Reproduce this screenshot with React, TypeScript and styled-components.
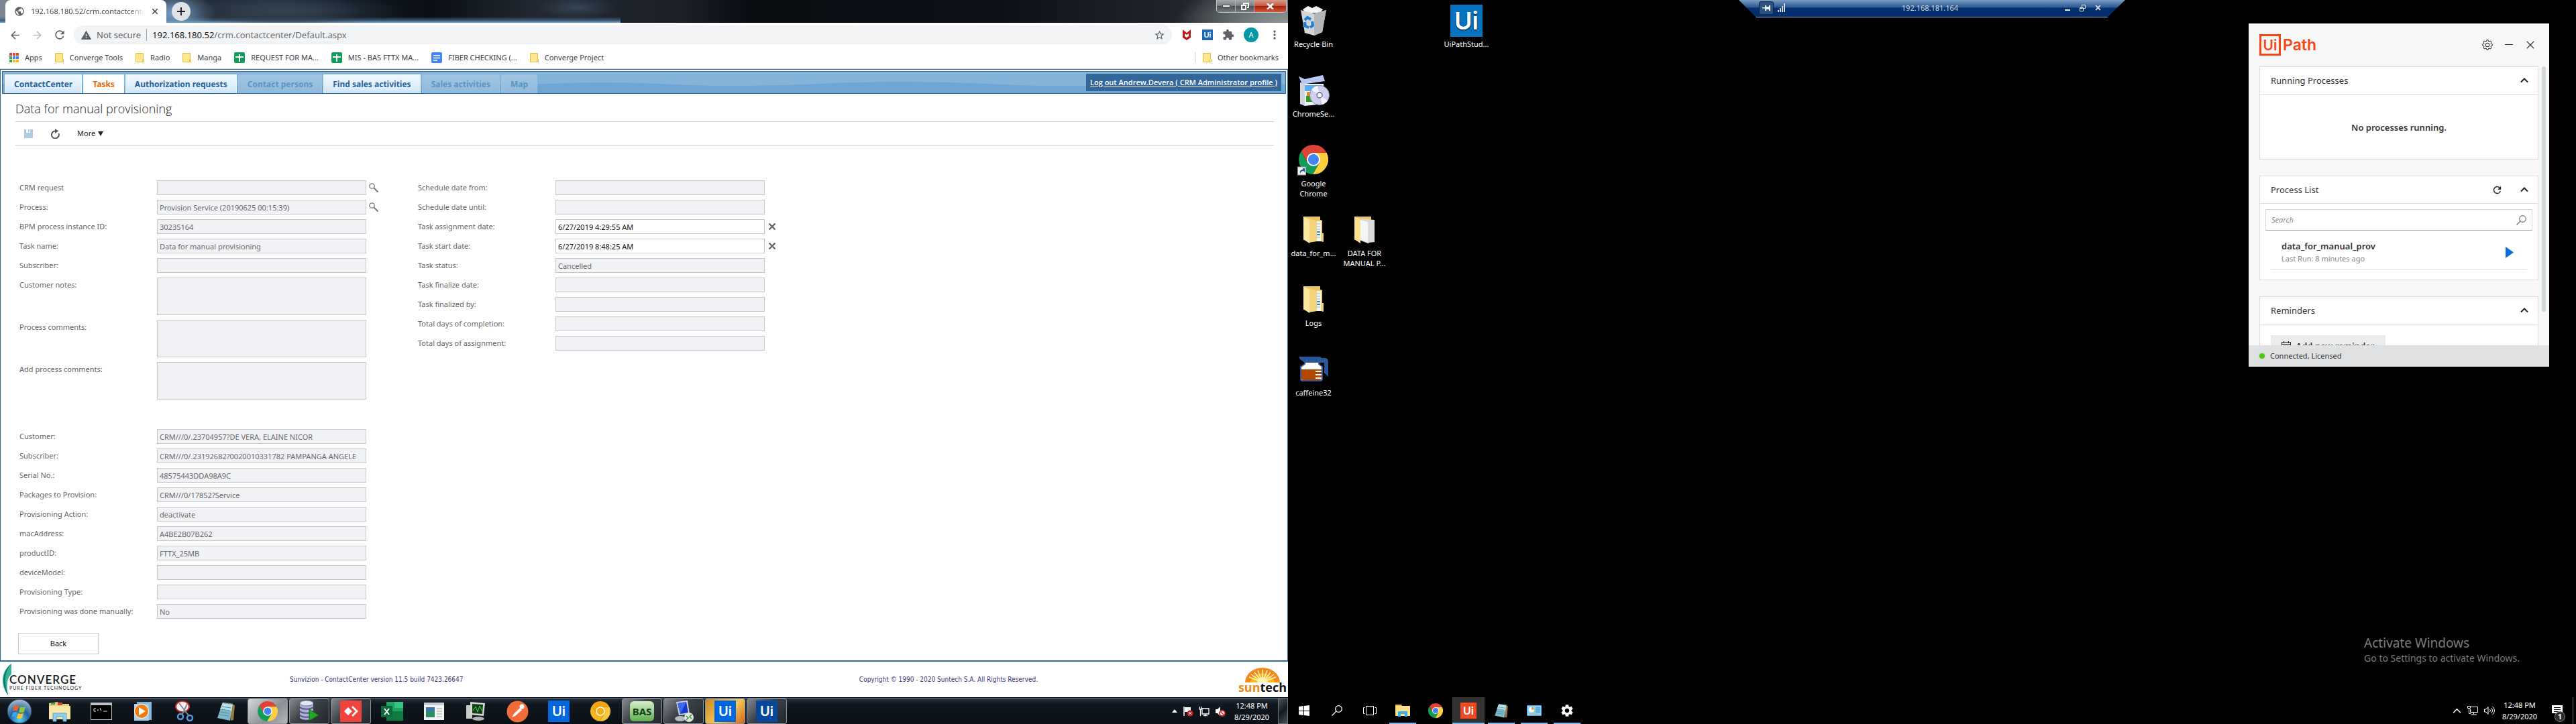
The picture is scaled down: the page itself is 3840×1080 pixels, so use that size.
import React from "react";
import styled, { createGlobalStyle, css } from "styled-components";
import {
  MdArrowBack, MdArrowForward, MdRefresh, MdStarBorder, MdExtension, MdMoreVert, MdWarning, MdPublic, MdSettings,
} from "react-icons/md";
import { BsGear } from "react-icons/bs";

const UI_FONT = '"Noto Sans", "Open Sans", sans-serif';

const GlobalStyle = createGlobalStyle`
  *, *::before, *::after { box-sizing: border-box; }
  body { margin: 0; background: #000; font-family: ${UI_FONT}; font-size: 11px; line-height: 16px; color: #333; }
  button, input, textarea { font: inherit; margin: 0; }
  h1, h2, p, ul { margin: 0; padding: 0; font-weight: 400; }
  ul { list-style: none; }
  svg { display: block; flex: none; }
`;

const Desktops = styled.div`
  display: grid;
  grid-template-columns: 1fr 1fr;
  min-height: 100vh;
  overflow: hidden;
`;

const plainButton = css`
  display: flex;
  align-items: center;
  justify-content: center;
  padding: 0;
  border: 0;
  background: none;
  color: inherit;
  cursor: pointer;
`;

/* ---------- shared marks ---------- */

const UiSquare = styled.span<{ $size: number; $bg: string; $font: number }>`
  display: flex;
  align-items: center;
  justify-content: center;
  width: ${(p) => p.$size}px;
  height: ${(p) => p.$size}px;
  background: ${(p) => p.$bg};
  color: #fff;
  font-family: Inter, sans-serif;
  font-size: ${(p) => p.$font}px;
  line-height: ${(p) => p.$size}px;
  font-weight: 600;
`;

const ChromeMark = ({ size, mono }: { size: number; mono?: boolean }) => (
  <svg width={size} height={size} viewBox="2 2 44 44">
    <path d="M5.54 12.03A22 22 0 0 1 43.6 14H24L15.34 29Z" fill={mono ? "#f2a60d" : "#db4437"} />
    <path d="M43.6 14A22 22 0 0 1 22.86 45.97L32.66 29 24 14Z" fill={mono ? "#fbc63c" : "#ffcd40"} />
    <path d="M22.86 45.97A22 22 0 0 1 5.54 12.03L15.34 29H32.66Z" fill={mono ? "#f7b51d" : "#0f9d58"} />
    <circle cx="24" cy="24" r="10" fill="#fff" />
    <circle cx="24" cy="24" r="8" fill={mono ? "#f4b01b" : "#4285f4"} />
  </svg>
);

const Notepad = ({ size }: { size: number }) => (
  <svg width={size} height={size} viewBox="0 0 32 32">
    <path d="M24 5l5 2-2 22-4 1z" fill="#9b7d3c" />
    <path d="M11 3l15 2-4 25-19-4z" fill="#7db9c8" />
    <path d="M11 3l15 2-2 11-17-3z" fill="#b9dfe6" />
    <path d="M10 9l13 2M9 13l13 2M8 17l13 2M6 21l14 2" stroke="#4f8fa3" />
    <path d="M11 3l15 2" stroke="#56606a" strokeWidth="2" strokeDasharray="1 1" />
  </svg>
);

/* ---------- browser ---------- */

const LeftDesktop = styled.section`
  display: flex;
  flex-direction: column;
  min-width: 0;
  background: #fff;
`;

const TabStrip = styled.header`
  display: flex;
  align-items: flex-end;
  height: 34px;
  padding-left: 8px;
  background:
    radial-gradient(120px 26px at 420px 16px, #33414f, transparent),
    radial-gradient(170px 24px at 430px 16px, #2a3846, transparent),
    radial-gradient(60px 30px at 262px 20px, #7ba6cf, transparent),
    radial-gradient(60px 18px at 860px 11px, #344354, transparent),
    linear-gradient(to top, #82add6 0, #3f5d7c 3px, transparent 9px) 0 0 / 925px 34px no-repeat,
    radial-gradient(170px 60px at 100% 100%, #8f9799, transparent),
    linear-gradient(90deg, #7d8894 0, #26313d 280px, #161e28 500px, #0a0f15 640px, #222831 800px, #1b2029 1010px, #090d12 1120px, #0c1117 1480px, #20252b 1760px, #51585b 100%);
`;

const BrowserTab = styled.div`
  display: flex;
  align-items: center;
  gap: 9px;
  width: 240px;
  height: 34px;
  padding: 0 11px 0 13px;
  border-radius: 8px 8px 0 0;
  background: #fff;
  color: #45494d;
`;

const TabTitle = styled.span`
  flex: 1;
  overflow: hidden;
  white-space: nowrap;
  mask-image: linear-gradient(90deg, #000 86%, transparent);
`;

const TabClose = styled.button`
  ${plainButton}
  width: 12px;
  height: 12px;
  color: #3c4043;
`;

const NewTab = styled.button`
  ${plainButton}
  align-self: center;
  width: 28px;
  height: 28px;
  margin-left: 8px;
  border-radius: 50%;
  background: #dfe3e8;
  color: #202124;
`;

const CaptionButtons = styled.div`
  display: flex;
  align-self: flex-start;
  height: 19px;
  margin: 0 2px 0 auto;
  border: 1px solid #c6cacc;
  border-top: 0;
  border-radius: 0 0 5px 5px;
  overflow: hidden;
`;

const CaptionButton = styled.button<{ $close?: boolean }>`
  ${plainButton}
  width: ${(p) => (p.$close ? 47 : 28)}px;
  border-right: ${(p) => (p.$close ? 0 : 1)}px solid #a9adb0;
  background: ${(p) =>
    p.$close
      ? "linear-gradient(#d99a8c, #c4593f 48%, #a52008 52%, #d4583c)"
      : "linear-gradient(#a5a9ac, #797e82 48%, #4b5054 52%, #777c80)"};
`;

const AddressRow = styled.div`
  display: flex;
  align-items: center;
  height: 36px;
  padding: 0 10px 0 13px;
  color: #5f6368;
`;

const NavButtons = styled.div`
  display: flex;
  gap: 14px;
  margin-right: 11px;
`;

const IconButton = styled.button<{ $color?: string }>`
  ${plainButton}
  color: ${(p) => p.$color ?? "inherit"};
`;

const Omnibox = styled.div`
  display: flex;
  flex: 1;
  align-items: center;
  height: 28px;
  padding: 0 10px;
  border-radius: 14px;
  background: #f1f3f4;
  font-size: 13px;
  line-height: 18px;
`;

const Security = styled.span`
  margin: 0 8px 0 7px;
  padding-right: 8px;
  border-right: 1px solid #a0a4a8;
  white-space: nowrap;
`;

const Url = styled.p`
  flex: 1;
  color: #6a6e73;
  white-space: nowrap;
  b { color: #202124; font-weight: 400; }
`;

const Extensions = styled.div`
  display: flex;
  align-items: center;
  gap: 14px;
  margin-left: 13px;
`;

const Avatar = styled.button`
  ${plainButton}
  width: 22px;
  height: 22px;
  border-radius: 50%;
  background: #0097a7;
  color: #fff;
`;

const Bookmarks = styled.nav`
  display: flex;
  align-items: center;
  gap: 19px;
  height: 33px;
  padding: 0 14px;
  border-bottom: 1px solid #d6d8da;
`;

const Bookmark = styled.a<{ $end?: boolean }>`
  display: flex;
  align-items: center;
  gap: 9px;
  color: #3c4043;
  text-decoration: none;
  white-space: nowrap;
  ${(p) => p.$end && "margin-left: auto; padding-left: 11px; border-left: 1px solid #ccc;"}
`;

const FolderIcon = () => (
  <svg width="13" height="14" viewBox="0 0 13 14">
    <path d="M.5.5h11v9h1v4H.5z" fill="#ffe68f" stroke="#e6bf45" />
    <path d="M10.500 13V10" stroke="#e6bf45" />
  </svg>
);
const SheetIcon = () => (
  <svg width="16" height="16" viewBox="0 0 16 16">
    <rect width="16" height="16" rx="2" fill="#0f9d58" />
    <path d="M8 3v11M2 7h12" stroke="#fff" strokeWidth="2" />
  </svg>
);
const DocIcon = () => (
  <svg width="16" height="16" viewBox="0 0 16 16">
    <rect width="16" height="16" rx="2" fill="#4285f4" />
    <path d="M3 5h10M3 8.500h10M3 12h6" stroke="#fff" strokeWidth="1.600" />
  </svg>
);
const AppsIcon = () => (
  <svg width="14" height="14" viewBox="0 0 14 14">
    {["#ea4335", "#ea4335", "#ea4335", "#34a853", "#4285f4", "#4285f4", "#34a853", "#fbbc05", "#fbbc05"].map((c, i) => (
      <rect key={i} x={(i % 3) * 5} y={Math.floor(i / 3) * 5} width="4" height="4" fill={c} />
    ))}
  </svg>
);

const bookmarkItems: { icon: React.ReactNode; text: string }[] = [
  { icon: <AppsIcon />, text: "Apps" },
  { icon: <FolderIcon />, text: "Converge Tools" },
  { icon: <FolderIcon />, text: "Radio" },
  { icon: <FolderIcon />, text: "Manga" },
  { icon: <SheetIcon />, text: "REQUEST FOR MA..." },
  { icon: <SheetIcon />, text: "MIS - BAS FTTX MA..." },
  { icon: <DocIcon />, text: "FIBER CHECKING (..." },
  { icon: <FolderIcon />, text: "Converge Project" },
];

/* ---------- CRM page ---------- */

const PageFrame = styled.main`
  display: flex;
  flex: 1;
  flex-direction: column;
  padding-top: 2px;
  border: 1px solid #336699;
  border-bottom: 2px solid #2f6a9f;
`;

const MenuBar = styled.nav`
  position: relative;
  display: flex;
  align-items: flex-end;
  gap: 2px;
  height: 34px;
  margin: 0 2px;
  padding: 0 6px 0 3px;
  border: 1px solid #336699;
  background: #86b4d9;
`;

const Wave = styled.svg`
  position: absolute;
  inset: 0;
  width: 100%;
  height: 100%;
`;

const MenuTab = styled.a<{ $kind?: "active" | "disabled" }>`
  position: relative;
  height: 28px;
  padding: 0 13px;
  border: 1px solid ${(p) => (p.$kind === "disabled" ? "#9cc2e0" : "#f4f9fd")};
  border-bottom: 0;
  background: ${(p) =>
    p.$kind === "active" ? "#fff" : p.$kind === "disabled" ? "linear-gradient(#a3c5e1, #8fb9db)" : "linear-gradient(#f0f8ff, #e2f1fd 50%, #cfe6f9)"};
  color: ${(p) => (p.$kind === "active" ? "#e06c0a" : p.$kind === "disabled" ? "#5b96c2" : "#2c6296")};
  font-size: 12px;
  line-height: 28px;
  font-weight: 700;
  text-decoration: none;
  white-space: nowrap;
`;

const LogOut = styled.a`
  position: relative;
  align-self: flex-start;
  height: 26px;
  margin: 3px 0 0 auto;
  padding: 0 6px;
  background: #336699;
  color: #fff;
  font-family: "Open Sans", sans-serif;
  line-height: 25px;
  font-weight: 600;
  white-space: nowrap;
`;

const PageBody = styled.div`
  display: flex;
  flex-direction: column;
  padding: 0 20px 9px 22px;
`;

const PageTitle = styled.h1`
  height: 42px;
  border-bottom: 1px solid #ccc;
  font-family: "Open Sans", sans-serif;
  font-size: 18px;
  line-height: 45px;
  font-weight: 300;
  color: #222;
`;

const PageTools = styled.div`
  display: flex;
  align-items: center;
  gap: 26px;
  height: 35px;
  padding-left: 13px;
  border-bottom: 1px solid #ccc;
  color: #222;
`;

const MoreButton = styled(IconButton)`
  gap: 4px;
`;

const FormColumns = styled.div`
  display: flex;
  gap: 59px;
  padding: 52px 0 0 6px;
`;

const FieldColumn = styled.div`
  display: flex;
  flex-direction: column;
  gap: 7px;
`;

const FieldRow = styled.div`
  display: grid;
  grid-template-columns: 205px 312px 18px;
  align-items: start;
`;

const FieldLabel = styled.label`
  color: #666;
  line-height: 22px;
  white-space: nowrap;
`;

const control = css<{ $editable?: boolean }>`
  display: block;
  width: 100%;
  padding: 0 3px;
  border: 1px solid #c8c8c8;
  border-radius: 0;
  outline: 0;
  background: ${(p) => (p.$editable ? "#fff" : "#f1f2f5")};
  color: ${(p) => (p.$editable ? "#111" : "#6a6a6a")};
`;

const TextField = styled.input<{ $editable?: boolean }>`
  ${control}
  height: 22px;
`;

const NotesField = styled.textarea`
  ${control}
  height: 56px;
  resize: none;
`;

const FieldAction = styled.button`
  ${plainButton}
  justify-self: end;
  width: 14px;
  height: 22px;
  color: #666;
`;

const LowerFields = styled(FieldColumn)`
  padding: 44px 0 0 6px;
`;

const BackButton = styled.button`
  width: 120px;
  height: 32px;
  margin: 21px 0 0 4px;
  border: 1px solid #c8c8c8;
  background: #fff;
  color: #111;
`;

const Footer = styled.footer`
  display: grid;
  grid-template-columns: 432px 1fr auto 297px 76px;
  align-items: center;
  height: 53px;
  color: #39357a;
  font-family: "DejaVu Sans Condensed", "DejaVu Sans", sans-serif;
  font-size: 10px;
  white-space: nowrap;
`;

const ConvergeLogo = styled.div`
  display: flex;
  align-items: center;
  padding-left: 3px;
  color: #222;
`;
const ConvergeWords = styled.div`
  display: flex;
  flex-direction: column;
  margin-left: -13px;
  padding-top: 10px;
`;
const ConvergeName = styled.strong`
  font: 600 17px/16px Lato, sans-serif;
  letter-spacing: 1px;
`;
const ConvergeTag = styled.span`
  font: 400 7px/9px Lato, sans-serif;
  letter-spacing: 1px;
`;

const SuntechLogo = styled.div`
  display: flex;
  grid-column: 5;
  flex-direction: column;
  align-items: center;
`;
const SuntechName = styled.strong`
  color: #111;
  font: 700 18px/14px "Open Sans", sans-serif;
  em { color: #f08a1c; font-style: normal; }
`;

type Field = { label: string; value?: string; notes?: boolean; action?: "search" | "clear" };

const leftFields: Field[] = [
  { label: "CRM request", action: "search" },
  { label: "Process:", value: "Provision Service (20190625 00:15:39)", action: "search" },
  { label: "BPM process instance ID:", value: "30235164" },
  { label: "Task name:", value: "Data for manual provisioning" },
  { label: "Subscriber:" },
  { label: "Customer notes:", notes: true },
  { label: "Process comments:", notes: true },
  { label: "Add process comments:", notes: true },
];
const rightFields: Field[] = [
  { label: "Schedule date from:" },
  { label: "Schedule date until:" },
  { label: "Task assignment date:", value: "6/27/2019 4:29:55 AM", action: "clear" },
  { label: "Task start date:", value: "6/27/2019 8:48:25 AM", action: "clear" },
  { label: "Task status:", value: "Cancelled" },
  { label: "Task finalize date:" },
  { label: "Task finalized by:" },
  { label: "Total days of completion:" },
  { label: "Total days of assignment:" },
];
const lowerFields: Field[] = [
  { label: "Customer:", value: "CRM///0/.23704957?DE VERA, ELAINE NICOR" },
  { label: "Subscriber:", value: "CRM///0/.23192682?0020010331782 PAMPANGA ANGELE" },
  { label: "Serial No.:", value: "48575443DDA98A9C" },
  { label: "Packages to Provision:", value: "CRM///0/17852?Service" },
  { label: "Provisioning Action:", value: "deactivate" },
  { label: "macAddress:", value: "A4BE2B07B262" },
  { label: "productID:", value: "FTTX_25MB" },
  { label: "deviceModel:" },
  { label: "Provisioning Type:" },
  { label: "Provisioning was done manually:", value: "No" },
];

const CrossIcon = ({ size, width }: { size: number; width: number }) => (
  <svg width={size} height={size} viewBox="0 0 12 12" stroke="currentColor" strokeWidth={width}>
    <path d="M1.500 1.500l9 9M10.500 1.500l-9 9" />
  </svg>
);

const FormRow = ({ field, id }: { field: Field; id: string }) => (
  <FieldRow>
    <FieldLabel htmlFor={id}>{field.label}</FieldLabel>
    {field.notes ? (
      <NotesField id={id} readOnly />
    ) : (
      <TextField id={id} readOnly={field.action !== "clear"} defaultValue={field.value} $editable={field.action === "clear"} />
    )}
    {field.action === "search" && (
      <FieldAction aria-label="Find">
        <svg width="14" height="14" viewBox="0 0 14 14" fill="none" stroke="#777">
          <circle cx="4.500" cy="4.500" r="3.700" strokeWidth="1.300" />
          <path d="M7.500 7.500l6 6" strokeWidth="2" />
        </svg>
      </FieldAction>
    )}
    {field.action === "clear" && (
      <FieldAction aria-label="Clear">
        <CrossIcon size={12} width={2.4} />
      </FieldAction>
    )}
  </FieldRow>
);

/* ---------- Windows 7 taskbar ---------- */

const Win7Bar = styled.div`
  display: flex;
  align-items: stretch;
  gap: 2px;
  height: 40px;
  border-top: 1px solid #0c1016;
  box-shadow: inset 0 1px #6d7a8c;
  background: linear-gradient(#2a333f, #10161e 25%, #0b1016);
  color: #fff;
`;

const StartOrb = styled.button`
  ${plainButton}
  width: 57px;
`;

const Win7Item = styled.button<{ $state?: "open" | "hot" | "lit" }>`
  ${plainButton}
  width: 60px;
  margin-top: 1px;
  border: 1px solid transparent;
  border-radius: 3px;
  ${(p) => p.$state && "border-color: #8f959b;"}
  background: ${(p) =>
    p.$state === "hot"
      ? "linear-gradient(135deg, #c98a24, #f3c85a 55%, #d3691b)"
      : p.$state === "lit"
      ? "linear-gradient(135deg, #d6d8da, #8b8f93 60%, #b5b8bb)"
      : p.$state === "open"
      ? "linear-gradient(135deg, #85898e, #3b4046 45%, #23282e)"
      : "none"};
`;

const Win7Tray = styled.div`
  display: flex;
  align-items: center;
  gap: 8px;
  margin-left: auto;
`;

const Clock = styled.time<{ $width: number }>`
  width: ${(p) => p.$width}px;
  color: #fff;
  line-height: 17px;
  text-align: center;
`;

const ShowDesktop = styled.button`
  ${plainButton}
  align-self: stretch;
  width: 15px;
  border: 1px solid #6d747c;
  background: linear-gradient(135deg, #4c545d, #14191f 50%, #4a525b);
`;

const BasMark = styled.span`
  display: flex;
  align-items: center;
  justify-content: center;
  width: 36px;
  height: 30px;
  border-radius: 6px;
  background: linear-gradient(#d5efc9, #5fae51);
  color: #10401a;
  font-size: 15px;
  font-weight: 700;
`;

const win7Items: { name: string; state?: "open" | "hot" | "lit"; icon: React.ReactNode }[] = [
  { name: "Explorer", icon: (
    <svg width="34" height="32" viewBox="0 0 34 32"><path d="M1 4l13-2 2 3h15v20H1z" fill="#e8ce7c" /><path d="M4 3h6v3H4z" fill="#4b9e52" /><path d="M14 3h7v4h-7z" fill="#c94a37" /><path d="M1 8h32v20H1z" fill="#f8e7a6" /><path d="M7 31V19h20v12h-5v-7H12v7z" fill="#8ecdee" stroke="#5aa2cf" /></svg>) },
  { name: "Command Prompt", icon: (
    <svg width="32" height="26" viewBox="0 0 32 26"><rect width="32" height="26" fill="#bfc3c7" /><rect x="1" y="4" width="30" height="21" fill="#000" /><path d="M5 9h3M5 9v4h3M11 10v3M14 8l2 5M19 13h6" stroke="#ddd" fill="none" /></svg>) },
  { name: "Media Player", icon: (
    <svg width="28" height="28" viewBox="0 0 28 28"><rect x="5" width="22" height="27" fill="#7fb7dd" /><rect x="1" y="3" width="22" height="25" fill="#a9cfe9" /><circle cx="12" cy="14" r="10.500" fill="#f07d12" stroke="#fff" /><path d="M8 8v12l10-6z" fill="#fff" /></svg>) },
  { name: "Snipping Tool", icon: (
    <svg width="32" height="32" viewBox="0 0 32 32" fill="none"><ellipse cx="13" cy="9" rx="10" ry="8" fill="#f5f5f5" stroke="#c8202a" strokeWidth="2" /><path d="M8 4l14 18M20 5L13 20" stroke="#888" strokeWidth="2" /><circle cx="10" cy="24" r="4" stroke="#4f9ae0" strokeWidth="2.500" /><circle cx="24" cy="26" r="4" stroke="#4f9ae0" strokeWidth="2.500" /></svg>) },
  { name: "Notepad", icon: <Notepad size={32} /> },
  { name: "Chrome", state: "lit", icon: <ChromeMark size={30} /> },
  { name: "Database", state: "open", icon: (
    <svg width="34" height="34" viewBox="0 0 34 34"><path d="M3 5v21c0 5 20 5 20 0V5z" fill="#aeb0d8" /><path d="M3 10c0 5 20 5 20 0M3 16c0 5 20 5 20 0M3 22c0 5 20 5 20 0" stroke="#56588c" fill="none" strokeWidth="2" /><ellipse cx="13" cy="5" rx="10" ry="4" fill="#e4e5f5" stroke="#7476a6" /><path d="M17 14v17l14-8z" fill="#27a327" stroke="#0d660d" /></svg>) },
  { name: "AnyDesk", state: "open", icon: (
    <svg width="32" height="32" viewBox="0 0 32 32"><path fill="#ef443b" d="M0 0h32v32H0z" /><path d="M12 10l6 6-6 6-6-6zM17 10l6 6-6 6 2 2 8-8-8-8z" fill="#fff" /></svg>) },
  { name: "Excel", icon: (
    <svg width="34" height="32" viewBox="0 0 34 32"><rect x="8" y="2" width="25" height="28" fill="#21a366" /><path d="M20 2h13v9H20z" fill="#33c481" /><path d="M8 16h25v14H8z" fill="#107c41" /><rect y="8" width="17" height="17" fill="#0b6a37" /><path d="M5 12l7 9M12 12l-7 9" stroke="#fff" strokeWidth="2" /></svg>) },
  { name: "Viewer", icon: (
    <svg width="30" height="26" viewBox="0 0 30 26"><path fill="#f4f4f4" d="M0 0h30v26H0z" /><path fill="#c8ccd0" d="M0 0h30v4H0z" /><path fill="#2f8f62" d="M3 7h13v15H3z" /><path fill="#3b76b0" d="M3 7h13v6H3z" /><path d="M19 9h8M19 13h8M19 17h8M19 21h8" stroke="#9aa" /></svg>) },
  { name: "System monitor", icon: (
    <svg width="30" height="30" viewBox="0 0 30 30"><path d="M1 6h9v20H1z" fill="#c9ccc6" /><path d="M7 1l22 2-2 19-20-2z" fill="#d5d7d2" /><path d="M10 4l16 1-1 14-15-1z" fill="#123d16" /><path d="M11 14l4-6 3 8 3-9 4 8" stroke="#49d556" fill="none" /><ellipse cx="19" cy="26" rx="9" ry="3" fill="#b3b5b0" /></svg>) },
  { name: "Postman", icon: (
    <svg width="33" height="33" viewBox="0 0 33 33"><circle cx="16.500" cy="16.500" r="16" fill="#f26b3a" /><path d="M8 25l3-5 9-9 3 3-10 9z" fill="#fff" /><circle cx="23" cy="9" r="3.500" fill="#fff" /></svg>) },
  { name: "UiPath Studio", icon: <UiSquare $size={32} $bg="#0067df" $font={20}>Ui</UiSquare> },
  { name: "Chrome Canary", icon: <ChromeMark size={30} mono /> },
  { name: "BAS", state: "open", icon: <BasMark>BAS</BasMark> },
  { name: "Remote Desktop", state: "open", icon: (
    <svg width="34" height="34" viewBox="0 0 34 34"><path d="M6 3l17-2 3 20-16 2z" fill="#c7d5e4" /><path d="M8 5l13-2 3 16-12 2z" fill="#1738c9" /><path d="M8 5l13-2-9 18z" fill="#3f68f0" /><ellipse cx="12" cy="28" rx="8" ry="4" fill="#b6bcc2" /><circle cx="25" cy="26" r="7" fill="#dfe9d9" /><path d="M21 24l3 3-3 3M29 22l-3 3 3 3" stroke="#2f9a33" fill="none" strokeWidth="1.500" /></svg>) },
  { name: "UiPath Robot", state: "hot", icon: <UiSquare $size={32} $bg="#0067df" $font={20}>Ui</UiSquare> },
  { name: "UiPath", state: "open", icon: <UiSquare $size={32} $bg="#04479b" $font={20}>Ui</UiSquare> },
];

/* ---------- right desktop ---------- */

const RightDesktop = styled.section`
  position: relative;
  display: flex;
  flex-direction: column;
  min-width: 0;
  background: #000;
  color: #fff;
`;

const IconGrid = styled.div`
  display: grid;
  flex: 1;
  grid-template-columns: repeat(auto-fill, 76px);
  grid-auto-rows: 104px;
`;

const Shortcut = styled.button<{ $col: number; $row: number }>`
  ${plainButton}
  flex-direction: column;
  justify-content: flex-start;
  gap: 3px;
  grid-column: ${(p) => p.$col};
  grid-row: ${(p) => p.$row};
  padding-top: 7px;
  line-height: 15px;
  text-shadow: 0 1px 2px #000;
`;

const IconSlot = styled.span`
  display: flex;
  align-items: center;
  justify-content: center;
  width: 48px;
  height: 48px;
`;

const DesktopFolder = ({ papers }: { papers?: boolean }) => (
  <svg width="32" height="42" viewBox="0 0 32 42">
    <path d="M1 1h25v5h2v30H1z" fill="#e9c767" />
    {papers ? (
      <>
        <path d="M10 4l21 2v33l-9 1z" fill="#dadada" />
        <path d="M9 5l13 4v32L9 36z" fill="#f5f5f5" stroke="#c5c5c5" strokeWidth=".6" />
        <path d="M1 1l9 4v36l-9-6z" fill="#fbe08f" />
      </>
    ) : (
      <>
        <path d="M18 8h9v30h-9z" fill="#f2f6f8" />
        <path d="M20 12h6M20 16h6M20 20h6M20 32h6" stroke="#9fb4c4" />
        <path d="M20 24h6M20 28h6" stroke="#3b8fc0" strokeWidth="2" />
        <path d="M27 7h2v19h2v13l-4-1z" fill="#f0cf73" />
        <path d="M9 4l12 4v30l-12 2z" fill="#f3d47c" />
        <path d="M1 1l9 5v35l-9-6z" fill="#ffe7a0" />
      </>
    )}
  </svg>
);

const shortcuts: { label: string; col: number; row: number; icon: React.ReactNode }[] = [
  { label: "Recycle Bin", col: 1, row: 1, icon: (
    <svg width="40" height="46" viewBox="0 0 40 46"><path d="M4 6l8-5 6 3 6-3 10 5-4 5H8z" fill="#f4f4f4" /><path d="M1 7l20 5 18-5-6 33-12 5-14-4z" fill="#d3d5d7" /><path d="M21 12L39 7l-6 33-12 5z" fill="#b4b7ba" /><path d="M7 22l4-4 5 3M7 25l1 6 5 2M18 24l1 6-4 3" stroke="#1a7fd8" strokeWidth="4" fill="none" /></svg>) },
  { label: "UiPathStud...", col: 4, row: 1, icon: <UiSquare $size={48} $bg="#0673c2" $font={36}>Ui</UiSquare> },
  { label: "ChromeSe...", col: 1, row: 2, icon: (
    <svg width="48" height="48" viewBox="-1 0 48 48"><path d="M1 3l9 4 27-6 3 9-34 5z" fill="#b7c9f3" /><path d="M3 12l7 2v33l-7-3z" fill="#cfd5dc" /><path d="M10 14h28v30l-28 3z" fill="#eef4fa" /><path d="M10 16h26v9H10z" fill="#57aef0" /><path d="M13 26h9v6h-9z" fill="#f58220" /><path d="M12 32h12v9H12z" fill="#2ca01c" /><circle cx="32" cy="31" r="14.500" fill="#cfcff0" stroke="#8d8db0" /><path d="M32 31L20 23a14 14 0 0 1 9-6zM32 31l12 8a14 14 0 0 1-8 6z" fill="#f4f2ff" /><circle cx="32" cy="31" r="4" fill="#fff" stroke="#66668a" strokeWidth="1.500" /></svg>) },
  { label: "Google Chrome", col: 1, row: 3, icon: (
    <svg width="48" height="48" viewBox="0 0 48 48"><svg x="2" y="1" width="44" height="44"><ChromeMark size={44} /></svg><rect x=".5" y="34" width="12" height="12" fill="#f2f2f2" stroke="#999" /><path d="M4 44c-1-4 1-6 4-6v-2h-3 6v6l-2-2c-3 0-4 2-5 4z" fill="#29579b" /></svg>) },
  { label: "data_for_m...", col: 1, row: 4, icon: <DesktopFolder /> },
  { label: "DATA FOR MANUAL P...", col: 2, row: 4, icon: <DesktopFolder papers /> },
  { label: "Logs", col: 1, row: 5, icon: <DesktopFolder /> },
  { label: "caffeine32", col: 1, row: 6, icon: (
    <svg width="44" height="38" viewBox="0 0 44 38"><path d="M0 0h32l2 2h6q4 1 4 6v22l-6-6V9h-4l-4 1H10L2 4z" fill="#2b579a" /><path d="M9 8h22l-1 3 5 4v18q0 3-3 3H6q-3 0-3-3V15l6-4z" fill="#fff" stroke="#2b579a" strokeWidth="2" /><path d="M4 19h30v13q0 3-3 3H7q-3 0-3-3z" fill="#b04a04" /><path d="M25 17h9M25 22h9M25 27h9M25 32h9" stroke="#fff" strokeWidth="2" /></svg>) },
];

const SessionBar = styled.div`
  position: absolute;
  top: 0;
  left: 50%;
  width: 576px;
  height: 26px;
  margin-left: -288px;
  display: grid;
  grid-template-columns: 1fr auto 1fr;
  align-items: center;
  padding: 0 36px 2px 30px;
  clip-path: polygon(0 0, 100% 0, 549px 100%, 26px 100%);
  border-bottom: 1px solid #9fb0c8;
  background: linear-gradient(#7b9cc4 0, #27568f 11px, #03306d 12px, #03306d 100%);
  color: #d5dbe2;
`;

const SessionGroup = styled.div<{ $end?: boolean }>`
  display: flex;
  align-items: center;
  gap: ${(p) => (p.$end ? 14 : 6)}px;
  justify-content: ${(p) => (p.$end ? "flex-end" : "flex-start")};
`;

const PinButton = styled.button`
  ${plainButton}
  width: 22px;
  height: 20px;
  border: 1px solid #10284a;
  border-radius: 3px;
  background: #2d537f;
`;

const RobotWindow = styled.div`
  position: absolute;
  top: 35px;
  right: 40px;
  display: flex;
  flex-direction: column;
  width: 448px;
  height: 512px;
  background: #f7f7f7;
  color: #333;
  font-size: 13px;
  line-height: 18px;
`;

const RobotHeader = styled.header`
  display: flex;
  align-items: center;
  gap: 16px;
  height: 64px;
  padding: 0 20px 0 16px;
`;

const RobotLogo = styled.div`
  display: flex;
  align-items: center;
  gap: 3px;
  margin-right: auto;
  color: #fa4616;
  font: 600 23px/32px Inter, sans-serif;
`;

const RobotLogoBox = styled.span`
  width: 32px;
  height: 32px;
  border: 3px solid #fa4616;
  font-size: 21px;
  line-height: 27px;
  text-align: center;
`;

const RobotTool = styled.button`
  ${plainButton}
  width: 16px;
  height: 16px;
`;

const RobotScroll = styled.div`
  display: flex;
  flex: 1;
  min-height: 0;
  gap: 5px;
  padding: 0 5px 0 16px;
  overflow: hidden;
`;

const CardStack = styled.div`
  display: flex;
  flex: 1;
  flex-direction: column;
  gap: 24px;
`;

const ScrollThumb = styled.div`
  width: 6px;
  height: 366px;
  border-radius: 3px;
  background: #cfd8dd;
`;

const Card = styled.section`
  flex: none;
  border: 1px solid #dedede;
  background: #fff;
`;

const CardHeader = styled.header`
  display: flex;
  align-items: center;
  gap: 26px;
  height: 41px;
  padding: 0 14px 0 16px;
  border-bottom: 1px solid #dedede;
  h2 { flex: 1; font-size: 13px; }
`;

const EmptyNote = styled.p`
  padding: 40px 0 38px;
  font-weight: 600;
  text-align: center;
`;

const SearchBox = styled.label`
  display: flex;
  align-items: center;
  height: 32px;
  margin: 8px;
  padding: 0 8px;
  border: 1px solid #d6d6d6;
  border-bottom-color: #aaa;
  color: #777;
  input {
    flex: 1;
    padding: 0;
    border: 0;
    outline: 0;
    background: none;
    font-size: 11px;
  }
  input::placeholder { color: #888; font-style: italic; opacity: 1; }
`;

const ProcessRow = styled.div`
  display: flex;
  align-items: center;
  justify-content: space-between;
  margin: 0 16px 15px;
  padding: 6px 20px 6px 16px;
  border-bottom: 1px solid #dedede;
  strong { display: block; font-weight: 600; }
  small { color: #888; font-size: 11px; }
`;

const ReminderButton = styled.button`
  ${plainButton}
  gap: 7px;
  width: 171px;
  height: 32px;
  margin: 16px;
  background: #ebecee;
  font-weight: 600;
`;

const RobotStatus = styled.footer`
  display: flex;
  align-items: center;
  gap: 8px;
  height: 32px;
  padding-left: 16px;
  background: #e0e1e3;
  font-size: 11px;
`;

const StatusDot = styled.span`
  width: 8px;
  height: 8px;
  border-radius: 50%;
  background: #52c41a;
  box-shadow: 0 0 3px #9be377;
`;

const ActivateNote = styled.div`
  position: absolute;
  right: 84px;
  bottom: 88px;
  color: #7b7b7b;
  font-size: 14px;
  line-height: 20px;
  h2 { font-size: 19px; line-height: 26px; }
`;

const Win10Bar = styled.div`
  display: flex;
  height: 40px;
  padding-right: 4px;
`;

const Win10Item = styled.button<{ $state?: "open" | "active" }>`
  ${plainButton}
  position: relative;
  width: 48px;
  margin-right: 1px;
  background: ${(p) => (p.$state === "active" ? "#333" : "none")};
  ${(p) =>
    p.$state &&
    css`
      &::after {
        content: "";
        position: absolute;
        right: ${p.$state === "active" ? 0 : 4}px;
        bottom: 0;
        left: ${p.$state === "active" ? 0 : 4}px;
        height: 2px;
        background: #76b9ed;
      }
    `}
`;

const Win10Tray = styled.div`
  display: flex;
  align-items: center;
  gap: 9px;
  margin-left: auto;
  border-right: 1px solid #777;
  padding-right: 11px;
`;

const Notifications = styled.button`
  ${plainButton}
  position: relative;
  width: 24px;
  height: 26px;
  margin-left: 8px;
`;

const NoteCount = styled.span`
  position: absolute;
  right: 0;
  bottom: -4px;
  width: 16px;
  height: 16px;
  border: 1px solid #888;
  border-radius: 50%;
  background: #2b2b2b;
  font-size: 11px;
  line-height: 14px;
  font-weight: 700;
`;

const win10Items: { name: string; state?: "open" | "active"; icon: React.ReactNode }[] = [
  { name: "Start", icon: <svg width="16" height="16" viewBox="0 0 16 16" fill="#fff"><path d="M0 2l7-1v7H0zM8 1l8-1v8H8zM0 9h7v6l-7-1zM8 9h8v7l-8-1z" /></svg> },
  { name: "Search", icon: <svg width="16" height="16" viewBox="0 0 16 16" fill="none" stroke="#fff" strokeWidth="1.300"><circle cx="10.500" cy="5.500" r="4.800" /><path d="M7 9l-6.500 6.500" /></svg> },
  { name: "Task View", icon: <svg width="20" height="14" viewBox="0 0 20 14" fill="none" stroke="#fff"><path d="M4.500.5h11v13h-11zM2.500 2.500h-2v9h2M17.500 2.500h2v9h-2" /></svg> },
  { name: "File Explorer", state: "open", icon: <svg width="22" height="18" viewBox="0 0 22 18"><path d="M0 0h9l1 2h12v15H0z" fill="#ffe08a" /><path d="M0 0h9v2H0z" fill="#f5b92d" /><path d="M4 18v-8h14v8h-4v-4H8v4z" fill="#3bb0e8" /></svg> },
  { name: "Chrome", icon: <ChromeMark size={22} /> },
  { name: "UiPath Assistant", state: "active", icon: <UiSquare $size={24} $bg="#f04b25" $font={16}>Ui</UiSquare> },
  { name: "Notepad", state: "open", icon: <Notepad size={24} /> },
  { name: "Control Panel", state: "open", icon: <svg width="22" height="16" viewBox="0 0 22 16"><rect width="22" height="16" rx="1" fill="#3fa9e8" /><path d="M1 1h20v14H1z" fill="#8ed3fa" /><circle cx="7" cy="6.500" r="4" fill="#fff" /><path d="M7 6.500v-4a4 4 0 0 1 4 4z" fill="#f59a23" /><path d="M13 4h7M13 7h7M13 10h7" stroke="#1c76b8" /><path d="M3 13h14" stroke="#f59a23" /></svg> },
  { name: "Settings", state: "open", icon: <MdSettings size={22} /> },
];

const Chevron = ({ size, width, color }: { size: number; width: number; color: string }) => (
  <svg width={size} height={size} viewBox="0 0 12 12" fill="none" stroke={color} strokeWidth={width}>
    <path d="M1 8.500l5-5 5 5" />
  </svg>
);

export default function App() {
  return (
    <Desktops>
      <GlobalStyle />
      <LeftDesktop>
        <TabStrip>
          <BrowserTab>
            <MdPublic size={16} color="#5f6368" />
            <TabTitle>192.168.180.52/crm.contactcente</TabTitle>
            <TabClose aria-label="Close tab"><CrossIcon size={10} width={1.8} /></TabClose>
          </BrowserTab>
          <NewTab aria-label="New tab">
            <svg width="12" height="12" viewBox="0 0 12 12" stroke="currentColor" strokeWidth="2"><path d="M6 0v12M0 6h12" /></svg>
          </NewTab>
          <CaptionButtons>
            <CaptionButton aria-label="Minimize"><svg width="12" height="4"><path d="M.5.5h11v3H.5z" fill="#fff" stroke="#444" /></svg></CaptionButton>
            <CaptionButton aria-label="Restore"><svg width="12" height="11" viewBox="0 0 12 11" fill="none" stroke="#fff" strokeWidth="2"><path d="M4 3V1h7v6H9" /><path d="M1 4h6v6H1z" /></svg></CaptionButton>
            <CaptionButton $close aria-label="Close"><svg width="11" height="9" viewBox="0 0 11 9" stroke="#fff" strokeWidth="2.600"><path d="M1 0l9 9M10 0L1 9" /></svg></CaptionButton>
          </CaptionButtons>
        </TabStrip>

        <AddressRow>
          <NavButtons>
            <IconButton aria-label="Back"><MdArrowBack size={19} /></IconButton>
            <IconButton aria-label="Forward" $color="#babcbe"><MdArrowForward size={19} /></IconButton>
            <IconButton aria-label="Reload"><MdRefresh size={20} /></IconButton>
          </NavButtons>
          <Omnibox>
            <MdWarning size={17} />
            <Security>Not secure</Security>
            <Url><b>192.168.180.52</b>/crm.contactcenter/Default.aspx</Url>
            <IconButton aria-label="Bookmark this page"><MdStarBorder size={17} /></IconButton>
          </Omnibox>
          <Extensions>
            <IconButton aria-label="McAfee"><svg width="18" height="18" viewBox="0 0 18 18"><path d="M3 1l6 5 6-5v12l-6 4-6-4z" fill="#c01818" /><path d="M6 7l3 2 3-2v4l-3 2-3-2z" fill="#fff" /></svg></IconButton>
            <IconButton aria-label="UiPath"><UiSquare $size={16} $bg="#1f66b0" $font={11}>Ui</UiSquare></IconButton>
            <IconButton aria-label="Extensions"><MdExtension size={18} /></IconButton>
            <Avatar>A</Avatar>
            <IconButton aria-label="Menu"><MdMoreVert size={20} /></IconButton>
          </Extensions>
        </AddressRow>

        <Bookmarks>
          {bookmarkItems.map((b) => (
            <Bookmark key={b.text} href="#">{b.icon}{b.text}</Bookmark>
          ))}
          <Bookmark href="#" $end><FolderIcon />Other bookmarks</Bookmark>
        </Bookmarks>

        <PageFrame>
          <MenuBar>
            <Wave viewBox="0 0 1914 32" preserveAspectRatio="none">
              <path d="M0 18Q300 22 600 20Q760 19 817 18Q890 14 980 18Q1100 24 1220 18Q1345 12 1470 18Q1580 24 1700 18H1914V32H0Z" fill="#6fa6d3" />
            </Wave>
            <MenuTab href="#">ContactCenter</MenuTab>
            <MenuTab href="#" $kind="active">Tasks</MenuTab>
            <MenuTab href="#">Authorization requests</MenuTab>
            <MenuTab $kind="disabled">Contact persons</MenuTab>
            <MenuTab href="#">Find sales activities</MenuTab>
            <MenuTab $kind="disabled">Sales activities</MenuTab>
            <MenuTab $kind="disabled">Map</MenuTab>
            <LogOut href="#">Log out Andrew.Devera ( CRM Administrator profile )</LogOut>
          </MenuBar>
          <PageBody>
            <PageTitle>Data for manual provisioning</PageTitle>
            <PageTools>
              <IconButton aria-label="Save"><svg width="13" height="13" viewBox="0 0 13 13"><path d="M0 0h13v13H0z" fill="#b0cae2" /><path d="M3 0h6v5H3z" fill="#fff" /><path d="M6 0h2v4H6z" fill="#b0cae2" /></svg></IconButton>
              <IconButton aria-label="Refresh"><svg width="14" height="15" viewBox="0 0 14 15" fill="none" stroke="#555" strokeWidth="2"><path d="M12.500 7A5.500 5.500 0 1 1 8 3.500" /><path d="M7 0l5 3.500L7 7z" fill="#555" stroke="none" /></svg></IconButton>
              <MoreButton>More <svg width="8" height="7"><path d="M0 0h8L4 7z" fill="#222" /></svg></MoreButton>
            </PageTools>
            <FormColumns>
              <FieldColumn>
                {leftFields.map((f, i) => <FormRow key={f.label} field={f} id={`task-${i}`} />)}
              </FieldColumn>
              <FieldColumn>
                {rightFields.map((f, i) => <FormRow key={f.label} field={f} id={`date-${i}`} />)}
              </FieldColumn>
            </FormColumns>
            <LowerFields>
              {lowerFields.map((f, i) => <FormRow key={f.label} field={f} id={`data-${i}`} />)}
            </LowerFields>
            <BackButton>Back</BackButton>
          </PageBody>
        </PageFrame>

        <Footer>
          <ConvergeLogo>
            <svg width="24" height="48" viewBox="0 0 24 48">
              <path d="M14 0C1 9-5 28 9 47C6 30 8 20 14 16z" fill="#35b394" />
              <path d="M14 0C4 12 2 26 9 47C1 36-3 14 14 0z" fill="#0d7d6b" />
            </svg>
            <ConvergeWords>
              <ConvergeName>CONVERGE</ConvergeName>
              <ConvergeTag>PURE FIBER TECHNOLOGY</ConvergeTag>
            </ConvergeWords>
          </ConvergeLogo>
          <span>Sunvizion - ContactCenter version 11.5 build 7423.26647</span>
          <span>Copyright © 1990 - 2020 Suntech S.A. All Rights Reserved.</span>
          <SuntechLogo>
            <svg width="52" height="22" viewBox="0 0 52 22">
              <path d="M0 22C2-7 50-7 52 22z" fill="#f58a1f" />
              <path d="M8 22C12 4 40 4 44 22z" fill="#fdb913" />
              <path d="M26 22L6 14M26 22L14 7M26 22V3M26 22L38 7M26 22l20-8M26 22L19 4M26 22l7-18M26 22L9 10M26 22l17-12" stroke="#fff6c9" strokeWidth="1.500" />
              <circle cx="26" cy="22" r="8" fill="#fff3a8" />
            </svg>
            <SuntechName><em>sun</em>tech</SuntechName>
          </SuntechLogo>
        </Footer>

        <Win7Bar>
          <StartOrb aria-label="Start">
            <svg width="38" height="38" viewBox="0 0 38 38">
              <defs><radialGradient id="orb" cx="50%" cy="85%" r="80%"><stop offset="0" stopColor="#5cd0f5" /><stop offset=".5" stopColor="#1f62a0" /><stop offset="1" stopColor="#9fb6cb" /></radialGradient></defs>
              <circle cx="19" cy="19" r="18" fill="url(#orb)" stroke="#23384d" />
              <path d="M11 11q4-2 7 0l-2 8q-4-2-7 0z" fill="#f0602a" />
              <path d="M20 12q4 2 8 0l-2 8q-4 2-8 0z" fill="#8cc63e" />
              <path d="M9 21q4-2 7 0l-2 7q-3-2-7 0z" fill="#3fa4e8" />
              <path d="M17 22q4 2 8 0l-2 7q-4 2-8 0z" fill="#fcc52c" />
            </svg>
          </StartOrb>
          {win7Items.map((it) => (
            <Win7Item key={it.name} $state={it.state} aria-label={it.name}>{it.icon}</Win7Item>
          ))}
          <Win7Tray>
            <svg width="8" height="5"><path d="M0 5h8L4 0z" fill="#fff" /></svg>
            <svg width="16" height="16" viewBox="0 0 16 16"><path d="M2 1v14" stroke="#fff" strokeWidth="1.500" /><path d="M3 2h9v7H3z" fill="#fff" /><circle cx="11" cy="11" r="4.500" fill="#d2232a" /><path d="M9 9l4 4M13 9l-4 4" stroke="#fff" /></svg>
            <svg width="16" height="16" viewBox="0 0 16 16" fill="none" stroke="#fff" strokeWidth="1.300"><path d="M5 4h10v8H5zM7 14.500h6M10 12v2M1 1v4h3V1M2.500 5v10" /></svg>
            <svg width="16" height="16" viewBox="0 0 16 16"><path d="M1 5h3l4-4v14l-4-4H1z" fill="#fff" /><circle cx="11" cy="11" r="4" fill="#fff" stroke="#d2232a" strokeWidth="1.800" /><path d="M8.500 8.500l5 5" stroke="#d2232a" strokeWidth="1.500" /></svg>
            <Clock $width={62}>12:48 PM<br />8/29/2020</Clock>
            <ShowDesktop aria-label="Show desktop" />
          </Win7Tray>
        </Win7Bar>
      </LeftDesktop>

      <RightDesktop>
        <IconGrid>
          {shortcuts.map((s) => (
            <Shortcut key={s.label} $col={s.col} $row={s.row}>
              <IconSlot>{s.icon}</IconSlot>
              {s.label}
            </Shortcut>
          ))}
        </IconGrid>

        <SessionBar>
          <SessionGroup>
            <PinButton aria-label="Pin"><svg width="13" height="10" viewBox="0 0 13 10" fill="#e8ecf0"><path d="M0 4h4V1h2v2h4V1h2v8h-2V7H6v2H4V5.500H0z" /></svg></PinButton>
            <svg width="11" height="13" viewBox="0 0 11 13" fill="#d5dbe2"><path d="M0 10h2v3H0zM3 7h2v6H3zM6 4h2v9H6zM9 0h2v13H9z" /></svg>
          </SessionGroup>
          <span>192.168.181.164</span>
          <SessionGroup $end>
            <IconButton aria-label="Minimize"><svg width="8" height="10"><path d="M0 7h8v2H0z" fill="#e8ecf0" /></svg></IconButton>
            <IconButton aria-label="Restore"><svg width="9" height="10" viewBox="0 0 9 10" fill="none" stroke="#e8ecf0"><path d="M3.500 3V.5h5v5H6M.5 4.500h5v5h-5zM.5 5.500h5" /></svg></IconButton>
            <IconButton aria-label="Close"><CrossIcon size={9} width={2.6} /></IconButton>
          </SessionGroup>
        </SessionBar>

        <RobotWindow>
          <RobotHeader>
            <RobotLogo><RobotLogoBox>Ui</RobotLogoBox>Path</RobotLogo>
            <RobotTool aria-label="Settings"><BsGear size={16} /></RobotTool>
            <RobotTool aria-label="Minimize"><svg width="12" height="2"><path d="M0 0h12v1H0z" fill="#222" /></svg></RobotTool>
            <RobotTool aria-label="Close"><CrossIcon size={14} width={1} /></RobotTool>
          </RobotHeader>
          <RobotScroll>
            <CardStack>
              <Card>
                <CardHeader>
                  <h2>Running Processes</h2>
                  <IconButton aria-label="Collapse"><Chevron size={12} width={2} color="#222" /></IconButton>
                </CardHeader>
                <EmptyNote>No processes running.</EmptyNote>
              </Card>
              <Card>
                <CardHeader>
                  <h2>Process List</h2>
                  <IconButton aria-label="Refresh"><MdRefresh size={17} color="#222" /></IconButton>
                  <IconButton aria-label="Collapse"><Chevron size={12} width={2} color="#222" /></IconButton>
                </CardHeader>
                <SearchBox>
                  <input aria-label="Search" placeholder="Search" />
                  <svg width="15" height="15" viewBox="0 0 15 15" fill="none" stroke="#777" strokeWidth="1.200"><circle cx="9.500" cy="5.500" r="4.800" /><path d="M6 9l-5.500 5.500" /></svg>
                </SearchBox>
                <ProcessRow>
                  <div>
                    <strong>data_for_manual_prov</strong>
                    <small>Last Run: 8 minutes ago</small>
                  </div>
                  <IconButton aria-label="Run"><svg width="12" height="17"><path d="M0 0v17l12-8.500z" fill="#0f6be0" /></svg></IconButton>
                </ProcessRow>
              </Card>
              <Card>
                <CardHeader>
                  <h2>Reminders</h2>
                  <IconButton aria-label="Collapse"><Chevron size={12} width={2} color="#222" /></IconButton>
                </CardHeader>
                <ReminderButton>
                  <svg width="14" height="14" viewBox="0 0 14 14" fill="none" stroke="#222"><path d="M.5 1.500h13v12H.5zM.5 4.500h13M3.500 0v3M10.500 0v3" /><path d="M3 7.500h8M3 10.500h8" strokeDasharray="1 1" /></svg>
                  Add new reminder
                </ReminderButton>
              </Card>
            </CardStack>
            <ScrollThumb />
          </RobotScroll>
          <RobotStatus><StatusDot />Connected, Licensed</RobotStatus>
        </RobotWindow>

        <ActivateNote>
          <h2>Activate Windows</h2>
          <p>Go to Settings to activate Windows.</p>
        </ActivateNote>

        <Win10Bar>
          {win10Items.map((it) => (
            <Win10Item key={it.name} $state={it.state} aria-label={it.name}>{it.icon}</Win10Item>
          ))}
          <Win10Tray>
            <Chevron size={13} width={1.3} color="#fff" />
            <svg width="16" height="14" viewBox="0 0 16 14" fill="none" stroke="#fff"><path d="M5 1.500h10.500v8H4.500V5M9.500 9.500v3M6 13h8M.5.5h4v3h-4zM2.500 4v7.500H5" /></svg>
            <svg width="17" height="14" viewBox="0 0 17 14" fill="none" stroke="#fff"><path d="M.5 5h2.500l3-3.500v11L3 9H.5zM8.500 5q2 2 0 4M10.500 3q4 4 0 8M12.500 1q6 6 0 12" /></svg>
            <Clock $width={54}>12:48 PM<br />8/29/2020</Clock>
            <Notifications aria-label="Notifications, 1 new">
              <svg width="16" height="16" viewBox="0 0 16 16"><path d="M0 0h16v12H9l-3 3v-3H0z" fill="#fff" /><path d="M3 3.500h10M3 6.500h10M3 9.500h6" stroke="#000" /></svg>
              <NoteCount>1</NoteCount>
            </Notifications>
          </Win10Tray>
        </Win10Bar>
      </RightDesktop>
    </Desktops>
  );
}
